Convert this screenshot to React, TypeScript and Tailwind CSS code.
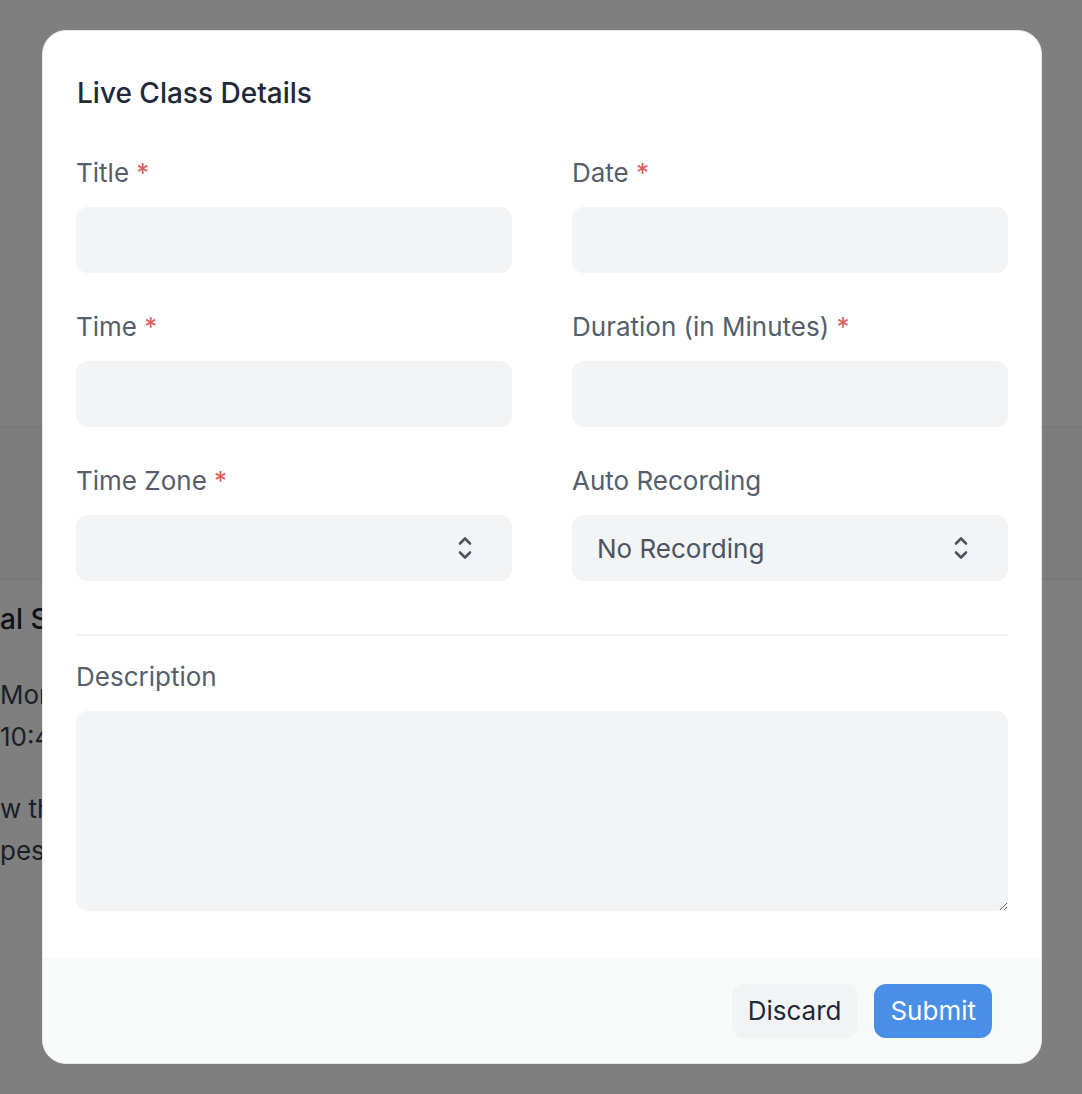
function Label({ text, required }: { text: string; required?: boolean }) {
  return (
    <label className="block text-[26px] leading-[30px] text-[#555e6a] mb-[19px]">
      {text}
      {required && <span className="text-[#e25c5c]"> *</span>}
    </label>
  );
}

function Field({ label, required }: { label: string; required?: boolean }) {
  return (
    <div>
      <Label text={label} required={required} />
      <input className="block w-full h-[66px] rounded-[12px] bg-[#f3f4f6] outline-none px-6 text-[26px]" />
    </div>
  );
}

function UpDown() {
  return (
    <svg width="14" height="26" viewBox="0 0 14 26" fill="none" stroke="#4b5563" strokeWidth="2.6" strokeLinecap="round" strokeLinejoin="round">
      <polyline points="2,8.5 7,3.5 12,8.5" />
      <polyline points="2,17.5 7,22.5 12,17.5" />
    </svg>
  );
}

function SelectField({ label, required, value }: { label: string; required?: boolean; value?: string }) {
  return (
    <div>
      <Label text={label} required={required} />
      <div className="flex items-center justify-between h-[66px] rounded-[12px] bg-[#f3f4f6] pl-[25px] pr-[40px]">
        <span className="text-[26px] text-[#4b5563]">{value ?? ''}</span>
        <UpDown />
      </div>
    </div>
  );
}

export default function App() {
  return (
    <div className="relative w-[1082px] h-[1094px] overflow-hidden bg-white font-['Inter',sans-serif]">
      {/* page behind the dialog */}
      <div className="h-[428px] border-b-2 border-[#f0f0f0]" />
      <div className="h-[152px] bg-[#fafafa] border-b-2 border-[#f0f0f0]" />
      <div className="pt-[22px] text-[#1f2937]">
        <div className="text-[28px] font-medium leading-[34px]">al Session</div>
        <div className="mt-[38px] text-[26px] leading-[42px] text-[#374151]">Monday</div>
        <div className="text-[26px] leading-[42px] text-[#374151]">10:45 AM</div>
        <div className="mt-[30px] text-[26px] leading-[42px] text-[#374151]">w the</div>
        <div className="text-[26px] leading-[42px] text-[#374151]">pesn</div>
      </div>

      {/* overlay */}
      <div className="absolute inset-0 bg-black/50" />

      {/* dialog */}
      <div className="absolute left-[42px] top-[30px] w-[1000px] h-[1034px] rounded-[24px] bg-white border border-[#e5e7eb] overflow-hidden flex flex-col">
        <div className="px-[33px] pt-[45px] flex-1">
          <h2 className="pl-[1px] text-[28px] font-medium leading-[34px] text-[#1f2937]">Live Class Details</h2>
          <div className="mt-[48px] grid grid-cols-2 gap-x-[60px] gap-y-[39px]">
            <Field label="Title" required />
            <Field label="Date" required />
            <Field label="Time" required />
            <Field label="Duration (in Minutes)" required />
            <SelectField label="Time Zone" required />
            <SelectField label="Auto Recording" value="No Recording" />
          </div>
          <div className="mt-[53px] border-t-2 border-[#f0f1f3]" />
          <div className="mt-[26px]">
            <Label text="Description" />
            <textarea className="block w-full h-[200px] rounded-[12px] bg-[#f3f4f6] outline-none px-6 py-4 text-[26px]" />
          </div>
        </div>
        <div className="h-[105px] bg-[#f8f9f9] flex items-center justify-end gap-[17px] px-[49px]">
          <button className="h-[54px] px-[16px] rounded-[12px] bg-[#f2f3f5] text-[26px] text-[#1f2937]">Discard</button>
          <button className="h-[54px] px-[16px] rounded-[12px] bg-[#4a8fe7] text-[26px] text-white">Submit</button>
        </div>
      </div>
    </div>
  );
}
